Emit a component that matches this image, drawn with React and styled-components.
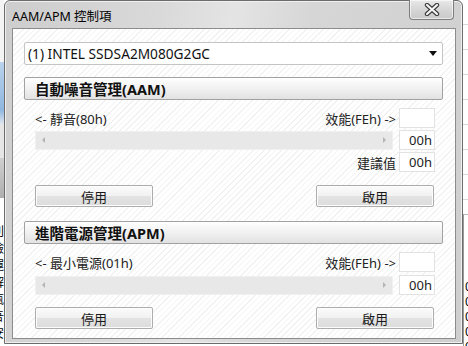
import React from "react";
import styled, { createGlobalStyle } from "styled-components";

const Global = createGlobalStyle`
  html, body { margin: 0; padding: 0; }
  body {
    width: 468px; height: 346px; overflow: hidden; background: #ffffff;
    font-family: "Noto Sans", "Noto Sans CJK TC", sans-serif;
    font-size: 13px; color: #1a1a1a;
  }
`;

const Desktop = styled.div`
  width: 468px; height: 346px;
  display: grid;
  grid-template-columns: 4px 459px 5px;
  grid-template-rows: 344px 2px;
  overflow: hidden;
  background: #ffffff;
`;

const LeftStrip = styled.div`
  grid-row: 1 / 3;
  overflow: hidden;
  display: flex; flex-direction: column;
  background: linear-gradient(to bottom,
    #f4f4f4 0 62px, #b9d3ec 62px, #8fb7e0 110px, #dfe6ee 124px,
    #e6e6e6 124px 158px, #d0d0d0 158px, #aeaeae 198px,
    #ffffff 198px);
`;

const StripText = styled.div`
  margin-top: 222px;
  margin-left: -8px;
  width: 12px;
  font-family: "Noto Sans CJK TC", sans-serif;
  font-size: 12px; line-height: 17px; color: #000;
  white-space: pre;
`;

const RightStrip = styled.div`
  grid-row: 1 / 3;
  overflow: hidden;
  background:
    repeating-linear-gradient(to bottom, transparent 0 24px, #d8d8d8 24px 25px),
    #ffffff;
  display: flex; flex-direction: column;
`;

const RightList = styled.div`
  margin-top: 214px;
  flex: 1;
  background: #fff;
  border-top: 1px solid #b8b8b8;
  border-left: 1px solid #9a9a9a;
  padding-top: 64px;
  padding-left: 1px;
  font-size: 12px; line-height: 15px; color: #000;
  white-space: pre;
`;

const Window = styled.div`
  grid-row: 1;
  box-sizing: border-box;
  border: 1px solid #6c6c6c;
  border-radius: 6px 6px 0 0;
  background: linear-gradient(100deg, #cdcdcd 0%, #d9d9d9 30%, #e4e4e4 45%, #d6d6d6 60%, #cfcfcf 100%);
  box-shadow: inset 0 0 0 1px #f0f0f0;
  display: flex; flex-direction: column;
  padding: 0 6px 4px 7px;
`;

const TitleBar = styled.div`
  height: 27px;
  display: flex; align-items: flex-start; justify-content: space-between;
`;

const TitleText = styled.div`
  margin-top: 5px;
  font-size: 12.5px; color: #000;
`;

const CloseButton = styled.div`
  margin-top: -1px;
  margin-right: 2px;
  width: 45px; height: 20px;
  box-sizing: border-box;
  border: 1px solid #7e7e7e;
  border-top: none;
  border-radius: 0 0 4px 4px;
  background: linear-gradient(to bottom, #e9e9e9, #d3d3d3 60%, #c9c9c9);
  box-shadow: inset 0 0 0 1px rgba(255,255,255,0.6);
  display: flex; align-items: center; justify-content: center;
`;

const Client = styled.div`
  flex: 1;
  box-sizing: border-box;
  border: 1px solid #8c8c8c;
  background:
    repeating-linear-gradient(-45deg, #ffffff 0 3px, #f2f2f2 3px 4px);
  padding: 13px 12px 0 11px;
  display: flex; flex-direction: column;
`;

const Combo = styled.div`
  height: 23px;
  box-sizing: border-box;
  border: 1px solid #c4c4c4;
  border-radius: 2px;
  background: #fff;
  display: flex; align-items: center; justify-content: space-between;
  padding: 0 4px 0 3px;
  font-size: 13.7px; color: #111;
`;

const Arrow = styled.span`
  width: 0; height: 0;
  border-left: 4px solid transparent;
  border-right: 4px solid transparent;
  border-top: 5px solid #111;
  margin-right: 1px;
`;

const Section = styled.div`
  margin-top: ${p => p.$top}px;
  display: flex; flex-direction: column;
`;

const Header = styled.div`
  height: 23px;
  box-sizing: border-box;
  border: 1px solid #a2a2a2;
  border-radius: 2px;
  background: linear-gradient(to bottom, #ffffff, #f1f1f1 50%, #e2e2e2);
  display: flex; align-items: center;
  padding-left: 10px;
  font-size: 14.5px; font-weight: 700; color: #111;
`;

const Body = styled.div`
  padding: 0 8px 0 11px;
  display: flex; flex-direction: column;
`;

const Row = styled.div`
  margin-top: ${p => p.$top}px;
  display: grid;
  grid-template-columns: 1fr 36px;
  column-gap: ${p => p.$gap ?? 3}px;
  align-items: center;
  height: 20px;
`;

const LabelPair = styled.div`
  display: flex; justify-content: space-between; align-items: center;
  font-size: 13px; color: #222;
`;

const RightLabel = styled.div`
  text-align: right;
  font-size: 13px; color: #222;
`;

const ValueBox = styled.div`
  height: 20px;
  box-sizing: border-box;
  border: 1px solid #e2e2e2;
  background: #fff;
  text-align: right;
  padding-right: 2px;
  line-height: 18px;
  font-size: 13px; color: #222;
`;

const ScrollTrack = styled.div`
  height: 19px;
  box-sizing: border-box;
  border: 1px solid #f0f0f0;
  background: #e8e8e8;
  display: flex; align-items: center; justify-content: space-between;
  padding: 0 6px;
`;

const ScrollArrow = styled.span`
  width: 0; height: 0;
  border-top: 3px solid transparent;
  border-bottom: 3px solid transparent;
  ${p => p.$dir === "left"
    ? "border-right: 3px solid #b4b4b4;"
    : "border-left: 3px solid #b4b4b4;"}
`;

const ButtonRow = styled.div`
  margin-top: ${p => p.$top}px;
  display: flex; justify-content: space-between;
  padding-right: 1px;
`;

const Button = styled.div`
  width: 118px; height: 22px;
  box-sizing: border-box;
  border: 1px solid #adadad;
  border-radius: 2px;
  background: linear-gradient(to bottom, #fbfbfb, #f1f1f1 50%, #e3e3e3 51%, #dcdcdc);
  box-shadow: inset 0 0 0 1px #fcfcfc;
  display: flex; align-items: center; justify-content: center;
  font-size: 13px; color: #1a1a1a;
`;

const CloseGlyph = () => (
  <svg width="16" height="13" viewBox="0 0 16 13">
    <path d="M3 2 L13 11 M13 2 L3 11" stroke="#3c3c3c" strokeWidth="4.4" strokeLinecap="round" />
    <path d="M3 2 L13 11 M13 2 L3 11" stroke="#f4f4f4" strokeWidth="2.2" strokeLinecap="round" />
  </svg>
);

const Scroll = () => (
  <ScrollTrack>
    <ScrollArrow $dir="left" />
    <ScrollArrow $dir="right" />
  </ScrollTrack>
);

export default function App() {
  return (
    <>
      <Global />
      <Desktop>
        <LeftStrip>
          <StripText>{"刹\n檢\n運\n解\n瓯\n吾\n安"}</StripText>
        </LeftStrip>
        <Window>
          <TitleBar>
            <TitleText>AAM/APM 控制項</TitleText>
            <CloseButton><CloseGlyph /></CloseButton>
          </TitleBar>
          <Client>
            <Combo>
              <span>(1) INTEL SSDSA2M080G2GC</span>
              <Arrow />
            </Combo>

            <Section $top={12}>
              <Header>自動噪音管理(AAM)</Header>
              <Body>
                <Row $top={8}>
                  <LabelPair>
                    <span>&lt;- 靜音(80h)</span>
                    <span>效能(FEh) -&gt;</span>
                  </LabelPair>
                  <ValueBox />
                </Row>
                <Row $top={2} $gap={6}>
                  <Scroll />
                  <ValueBox>00h</ValueBox>
                </Row>
                <Row $top={2}>
                  <RightLabel>建議值</RightLabel>
                  <ValueBox>00h</ValueBox>
                </Row>
                <ButtonRow $top={13}>
                  <Button>停用</Button>
                  <Button>啟用</Button>
                </ButtonRow>
              </Body>
            </Section>

            <Section $top={14}>
              <Header>進階電源管理(APM)</Header>
              <Body>
                <Row $top={8}>
                  <LabelPair>
                    <span>&lt;- 最小電源(01h)</span>
                    <span>效能(FEh) -&gt;</span>
                  </LabelPair>
                  <ValueBox />
                </Row>
                <Row $top={3} $gap={6}>
                  <Scroll />
                  <ValueBox>00h</ValueBox>
                </Row>
                <ButtonRow $top={12}>
                  <Button>停用</Button>
                  <Button>啟用</Button>
                </ButtonRow>
              </Body>
            </Section>
          </Client>
        </Window>
        <RightStrip>
          <RightList>{"0\n0\n0\n0\n0\n0"}</RightList>
        </RightStrip>
      </Desktop>
    </>
  );
}
